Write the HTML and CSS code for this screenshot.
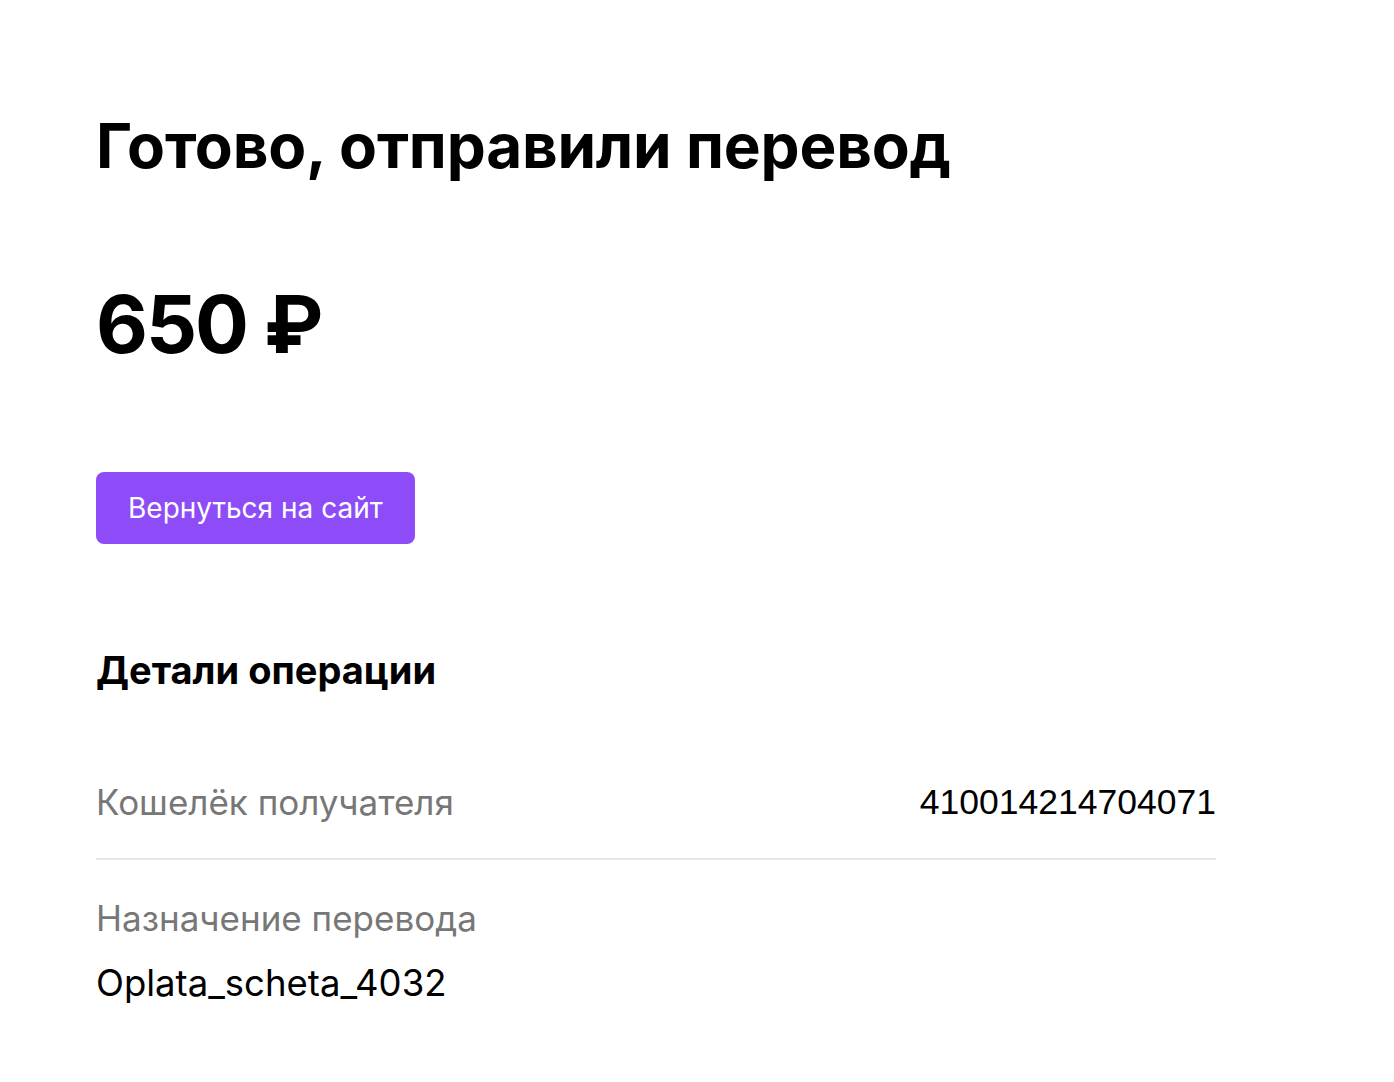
FILE: index.html
```html
<!DOCTYPE html>
<html lang="ru">
<head>
    <meta charset="UTF-8">
    <meta name="viewport" content="width=device-width, initial-scale=1.0">
    <title>Перевод отправлен</title>
    <link rel="stylesheet" href="styles.css">
</head>
<body>

    <div class="page">
        <h1 class="title">Готово, отправили перевод</h1>

        <div class="amount">650 ₽</div>

        <a class="back-btn" href="#">Вернуться на сайт</a>

        <h2 class="details-title">Детали операции</h2>

        <div class="details">
            <div class="row row-inline">
                <span class="label">Кошелёк получателя</span>
                <span class="value value-num">410014214704071</span>
            </div>
            <div class="row">
                <div class="label">Назначение перевода</div>
                <div class="value">Oplata_scheta_4032</div>
            </div>
        </div>
    </div>

</body>
</html>
```

FILE: styles.css
```css
body {
    margin: 0;
    font-family: Inter, "Noto Sans", sans-serif;
    background-color: #fff;
    color: #000;
}
.page {
    width: 1120px;
    padding: 96px 0 0 96px;
}
.title {
    margin: 0;
    font-size: 62px;
    font-weight: 700;
    line-height: 100px;
    letter-spacing: -0.2px;
}
.amount {
    margin-top: 78px;
    font-size: 80px;
    font-weight: 700;
    line-height: 100px;
    letter-spacing: -2px;
}
.back-btn {
    display: inline-block;
    margin-top: 98px;
    padding: 0 32px;
    height: 72px;
    line-height: 72px;
    background-color: #8d4cf8;
    color: #fff;
    font-size: 28px;
    text-decoration: none;
    border-radius: 8px;
}
.details-title {
    margin: 96px 0 0;
    font-size: 38px;
    font-weight: 700;
    line-height: 60px;
}
.details {
    margin-top: 76px;
}
.row {
    padding: 0 0 24px;
}
.row-inline {
    display: flex;
    justify-content: space-between;
    align-items: center;
    padding: 0 0 30px;
    border-bottom: 2px solid #e6e6e6;
    margin-bottom: 32px;
}
.label {
    font-size: 35px;
    color: #777;
    line-height: 52px;
}
.value {
    font-size: 36.5px;
    line-height: 52px;
}
.row .value {
    margin-top: 13px;
}
.row-inline .value {
    margin-top: 0;
}
.value-num {
    font-family: "Liberation Sans", Arial, sans-serif;
    font-size: 35.5px;
}
```
